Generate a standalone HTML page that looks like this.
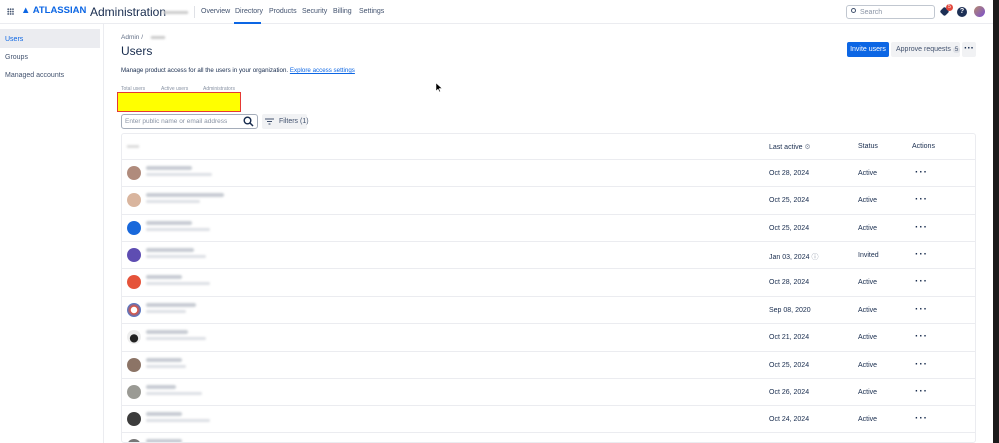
<!DOCTYPE html>
<html><head><style>
*{margin:0;padding:0;box-sizing:border-box}
body{width:999px;height:443px;overflow:hidden;background:#fff;font-family:"Liberation Sans",sans-serif;color:#172b4d;position:relative;font-size:7px;white-space:nowrap}
.abs{position:absolute}
.top{position:absolute;left:0;top:0;width:999px;height:24px;border-bottom:1px solid #ebecf0}
.nav a{position:absolute;top:8px;font-size:7px;color:#42526e}
.side{position:absolute;left:0;top:24px;width:104px;height:419px;border-right:1px solid #ebecf0}
.side div{position:absolute;left:5px;font-size:7px;color:#42526e}
.tbl{position:absolute;left:121px;top:133px;width:855px;height:310px;border:1px solid #ebecf0;border-radius:3px;overflow:hidden}
.row{position:absolute;left:0;width:855px;height:27px;border-top:1px solid #ebecf0}
.av{position:absolute;left:5px;top:6px;width:14px;height:14px;border-radius:50%}
.nm{position:absolute;left:24px;top:6px;height:4px;background:#c8ccd3;border-radius:2px;filter:blur(1px)}
.em{position:absolute;left:24px;top:13px;height:3px;background:#dde0e5;border-radius:2px;filter:blur(1px)}
.c1{position:absolute;left:647px;top:10px;font-size:7px}
.c2{position:absolute;left:736px;top:10px;font-size:7px}
.c3{position:absolute;left:793px;top:7px;font-size:10px;font-weight:bold;letter-spacing:1px}
</style></head><body>
<div class="top">
 <div class="abs" style="left:7px;top:8px;width:7px;height:7px;background:radial-gradient(circle,#42526e 0.9px,transparent 1px) 0 0/2.4px 2.4px"></div>
 <div class="abs" style="left:21px;top:5px;font-size:9.5px;font-weight:bold;color:#0c66e4">▲ ATLASSIAN</div>
 <div class="abs" style="left:90px;top:5px;font-size:12px;color:#172b4d">Administration</div>
 <div class="abs" style="left:163px;top:11px;width:25px;height:3px;background:#ccc;filter:blur(1px)"></div>
 <div class="abs" style="left:194px;top:6px;width:1px;height:12px;background:#dfe1e6"></div>
 <div class="nav"><a style="left:201px">Overview</a><a style="left:235px">Directory</a><a style="left:269px">Products</a><a style="left:302px">Security</a><a style="left:333px">Billing</a><a style="left:359px">Settings</a></div>
 <div class="abs" style="left:234px;top:22px;width:27px;height:2px;background:#0c66e4"></div>
 <div class="abs" style="left:846px;top:5px;width:89px;height:14px;border:1px solid #c1c7d0;border-radius:3px;font-size:7px;color:#8993a4;padding:3px 0 0 13px">Search</div>
 <div class="abs" style="left:851px;top:8px;width:5px;height:5px;border:1px solid #42526e;border-radius:50%"></div>
 <div class="abs" style="left:941px;top:8px;width:7px;height:7px;background:#1d2f55;border-radius:2px;transform:rotate(45deg)"></div>
 <div class="abs" style="left:946px;top:4px;width:7px;height:7px;background:#e2483d;border-radius:50%;color:#fff;font-size:5px;text-align:center;line-height:7px">5</div>
 <div class="abs" style="left:957px;top:7px;width:10px;height:10px;background:#1d2f55;border-radius:50%;color:#fff;font-size:7px;text-align:center;line-height:10px;font-weight:bold">?</div>
 <div class="abs" style="left:974px;top:6px;width:11px;height:11px;background:linear-gradient(135deg,#b58a6b,#7a4fd0);border-radius:50%"></div>
</div>
<div class="abs" style="left:993px;top:0;width:6px;height:443px;background:#1b1b1b"></div>
<div class="side">
 <div class="abs" style="left:0;top:5px;width:100px;height:19px;background:#ebecf0"></div>
 <div style="top:12px;color:#0c66e4">Users</div>
 <div style="top:30px">Groups</div>
 <div style="top:48px">Managed accounts</div>
</div>
<div class="abs" style="left:121px;top:34px;font-size:6.5px;color:#626f86">Admin /</div>
<div class="abs" style="left:151px;top:36px;width:14px;height:3px;background:#ccc;filter:blur(1px)"></div>
<div class="abs" style="left:121px;top:44px;font-size:12px">Users</div>
<div class="abs" style="left:847px;top:42px;width:42px;height:15px;background:#0c66e4;border-radius:2px;color:#fff;font-size:7px;text-align:center;line-height:15px">Invite users</div>
<div class="abs" style="left:891px;top:42px;width:69px;height:15px;background:#f1f2f4;border-radius:2px;color:#42526e;font-size:7px;padding-left:5px;line-height:15px">Approve requests <span style="background:#dfe1e6;border-radius:5px;padding:0 2px;font-size:6px">5</span></div>
<div class="abs" style="left:962px;top:42px;width:14px;height:15px;background:#f1f2f4;border-radius:2px;font-size:10px;font-weight:bold;text-align:center;line-height:14px">···</div>
<div class="abs" style="left:121px;top:67px;font-size:6.2px">Manage product access for all the users in your organization. <span style="color:#0c66e4;text-decoration:underline">Explore access settings</span></div>
<div class="abs" style="left:121px;top:86px;font-size:5px;color:#8993a4">Total users</div>
<div class="abs" style="left:161px;top:86px;font-size:5px;color:#8993a4">Active users</div>
<div class="abs" style="left:203px;top:86px;font-size:5px;color:#8993a4">Administrators</div>
<div class="abs" style="left:117px;top:92px;width:124px;height:20px;background:#ffff00;border:1px solid #e53935"></div>
<div class="abs" style="left:121px;top:114px;width:137px;height:15px;border:1px solid #a5adba;border-radius:3px;font-size:6.5px;color:#8993a4;padding:3px 0 0 3px">Enter public name or email address</div>
<svg class="abs" style="left:243px;top:116px" width="11" height="11" viewBox="0 0 11 11"><circle cx="4.5" cy="4.5" r="3.3" fill="none" stroke="#172b4d" stroke-width="1.4"/><path d="M7 7l3 3" stroke="#172b4d" stroke-width="1.5"/></svg>
<div class="abs" style="left:262px;top:114px;width:45px;height:15px;background:#f1f2f4;border-radius:2px;font-size:7px;color:#42526e;padding:4px 0 0 17px">Filters (1)</div>
<svg class="abs" style="left:265px;top:118px" width="9" height="7"><path d="M0 1h9M2 3.5h5M3.5 6h2" stroke="#42526e" stroke-width="1"/></svg>
<div class="tbl">
<div class="abs" style="left:5px;top:11px;width:12px;height:3px;background:#ddd;filter:blur(1px)"></div>
<div class="abs" style="left:647px;top:9px;font-size:7px">Last active <span style="color:#8993a4">⚙</span></div>
<div class="abs" style="left:736px;top:9px;font-size:7px">Status</div>
<div class="abs" style="left:790px;top:9px;font-size:7px">Actions</div>
<div class="row" style="top:25px"><div class="av" style="background:#b08b7c"></div><div class="nm" style="width:46px"></div><div class="em" style="width:66px"></div><div class="c1">Oct 28, 2024</div><div class="c2">Active</div><div class="c3">···</div></div>
<div class="row" style="top:52px"><div class="av" style="background:#d9b59e"></div><div class="nm" style="width:78px"></div><div class="em" style="width:54px"></div><div class="c1">Oct 25, 2024</div><div class="c2">Active</div><div class="c3">···</div></div>
<div class="row" style="top:80px"><div class="av" style="background:#1868db"></div><div class="nm" style="width:46px"></div><div class="em" style="width:64px"></div><div class="c1">Oct 25, 2024</div><div class="c2">Active</div><div class="c3">···</div></div>
<div class="row" style="top:107px"><div class="av" style="background:#5e4db2"></div><div class="nm" style="width:48px"></div><div class="em" style="width:60px"></div><div class="c1">Jan 03, 2024 <span style="color:#8993a4">ⓘ</span></div><div class="c2">Invited</div><div class="c3">···</div></div>
<div class="row" style="top:134px"><div class="av" style="background:#e5533a"></div><div class="nm" style="width:36px"></div><div class="em" style="width:64px"></div><div class="c1">Oct 28, 2024</div><div class="c2">Active</div><div class="c3">···</div></div>
<div class="row" style="top:162px"><div class="av" style="background:radial-gradient(circle,#fff 30%,#e5533a 35%,#4a7bd0 70%)"></div><div class="nm" style="width:50px"></div><div class="em" style="width:40px"></div><div class="c1">Sep 08, 2020</div><div class="c2">Active</div><div class="c3">···</div></div>
<div class="row" style="top:189px"><div class="av" style="background:radial-gradient(circle at 50% 60%,#222 35%,#eee 40%)"></div><div class="nm" style="width:42px"></div><div class="em" style="width:60px"></div><div class="c1">Oct 21, 2024</div><div class="c2">Active</div><div class="c3">···</div></div>
<div class="row" style="top:217px"><div class="av" style="background:#8c7466"></div><div class="nm" style="width:36px"></div><div class="em" style="width:40px"></div><div class="c1">Oct 25, 2024</div><div class="c2">Active</div><div class="c3">···</div></div>
<div class="row" style="top:244px"><div class="av" style="background:#9a9a94"></div><div class="nm" style="width:30px"></div><div class="em" style="width:56px"></div><div class="c1">Oct 26, 2024</div><div class="c2">Active</div><div class="c3">···</div></div>
<div class="row" style="top:271px"><div class="av" style="background:#3c3c3c"></div><div class="nm" style="width:36px"></div><div class="em" style="width:64px"></div><div class="c1">Oct 24, 2024</div><div class="c2">Active</div><div class="c3">···</div></div>
<div class="row" style="top:298px"><div class="av" style="background:#777"></div><div class="nm" style="width:36px"></div></div>
</div>
<svg class="abs" style="left:435px;top:83px" width="7" height="10"><path d="M1 0v8l2-2 1.5 3 1-.5L4 5.5h3z" fill="#000" stroke="#fff" stroke-width=".5"/></svg>
</body></html>
